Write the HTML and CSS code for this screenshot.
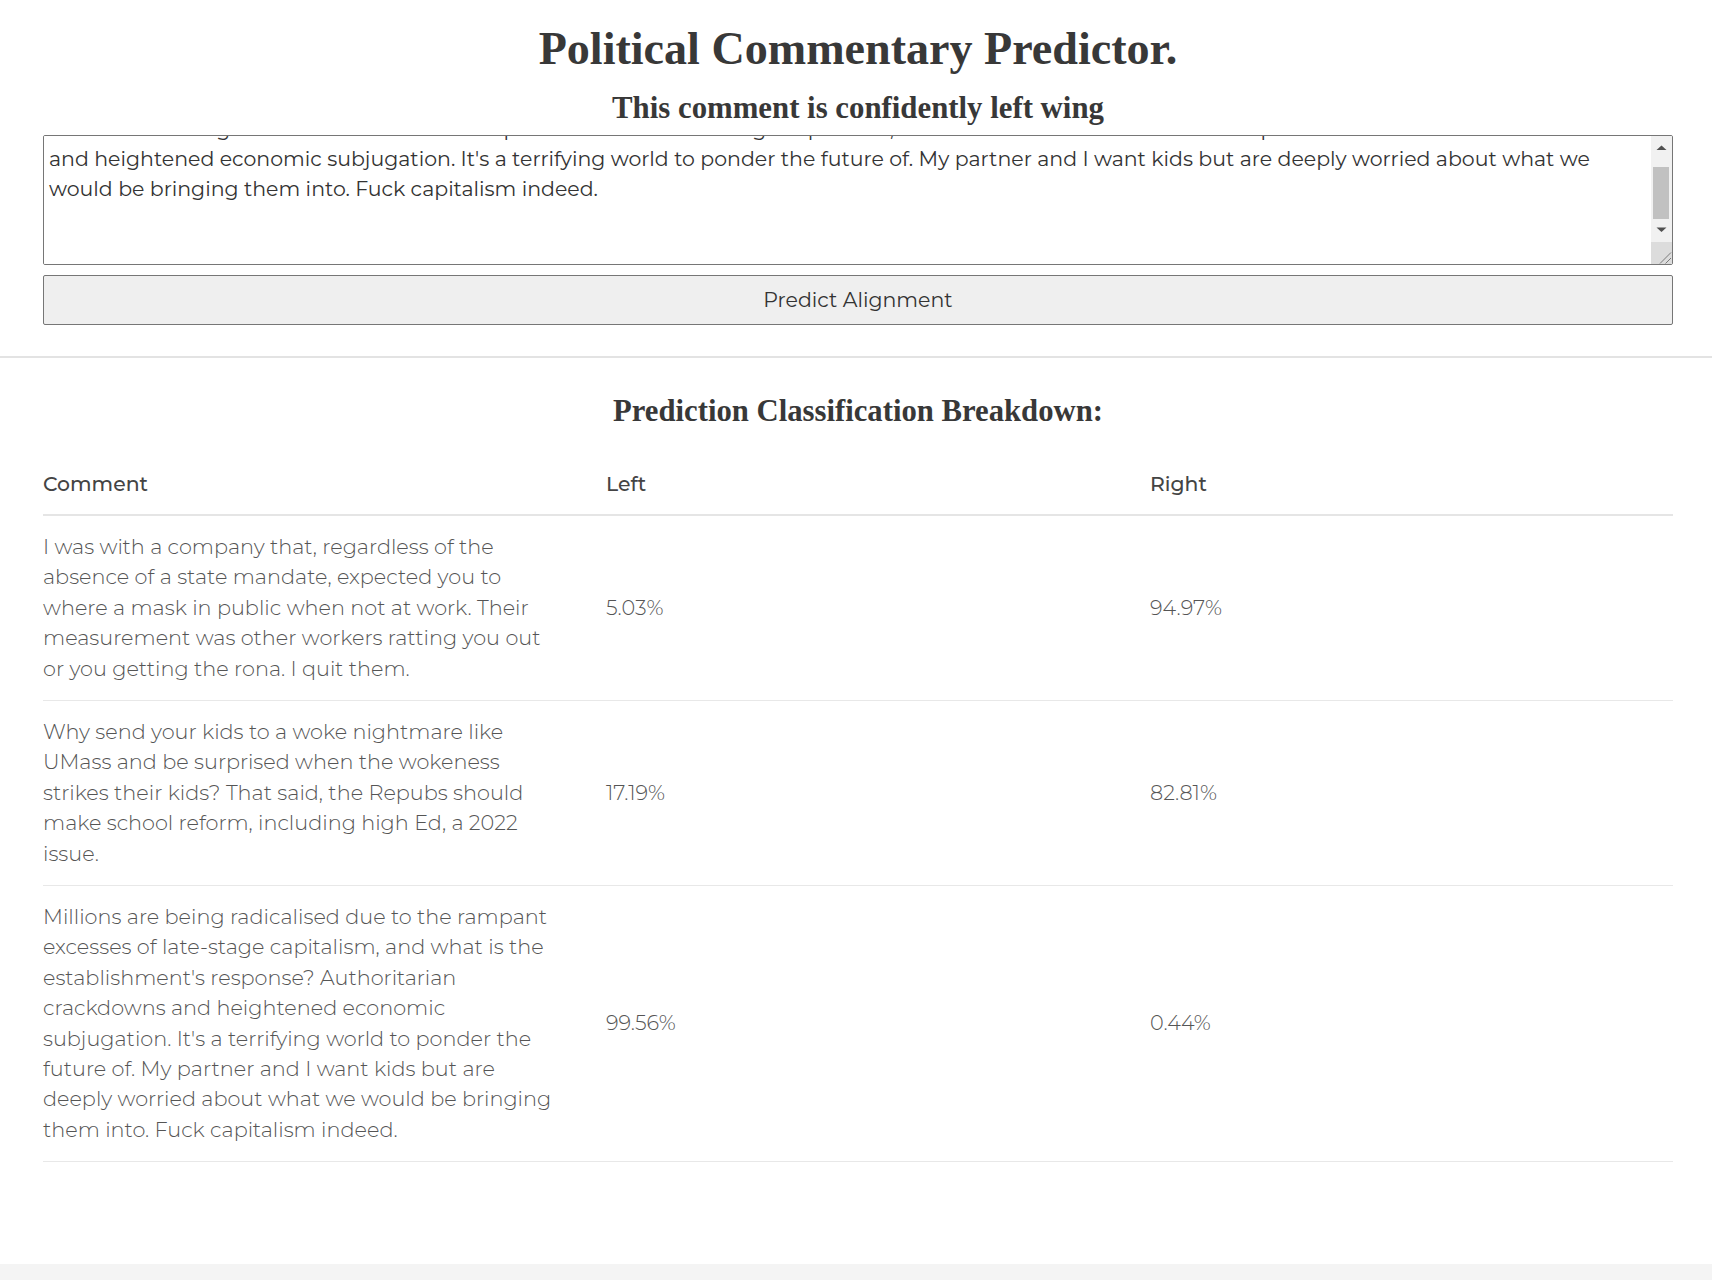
FILE: index.html
```html
<!DOCTYPE html>
<html lang="en">
<head>
<meta charset="utf-8">
<title>Political Commentary Predictor</title>
<link rel="stylesheet" href="styles.css">
</head>
<body>
<header class="predictor">
  <h1 class="page-title">Political Commentary Predictor.</h1>
  <h2 class="verdict">This comment is confidently left wing</h2>
  <form class="predict-form">
    <div class="input-frame">
      <textarea class="comment-input" id="comment">Millions are being radicalised due to the rampant excesses of late-stage capitalism, and what is the establishment's response? Authoritarian crackdowns and heightened economic subjugation. It's a terrifying world to ponder the future of. My partner and I want kids but are deeply worried about what we would be bringing them into. Fuck capitalism indeed.

</textarea>
      <div class="scrollbar" aria-hidden="true">
        <span class="sb-button"><svg width="21" height="21" viewBox="0 0 21 21"><polygon points="5.5,14 15.5,14 10.5,9.5"/></svg></span>
        <span class="sb-track"><span class="sb-thumb"></span></span>
        <span class="sb-button"><svg width="21" height="21" viewBox="0 0 21 21"><polygon points="5.5,8.5 15.5,8.5 10.5,13"/></svg></span>
        <span class="sb-corner"><svg width="21" height="22" viewBox="0 0 21 22"><line x1="9" y1="21.5" x2="20" y2="10.5"/><line x1="14.5" y1="21.5" x2="20" y2="16"/></svg></span>
      </div>
    </div>
    <button type="button" class="predict-btn">Predict Alignment</button>
  </form>
</header>
<main class="results">
  <h2 class="results-title">Prediction Classification Breakdown:</h2>
  <table class="breakdown">
    <colgroup>
      <col class="col-comment">
      <col class="col-left">
      <col class="col-right">
    </colgroup>
    <thead>
      <tr><th>Comment</th><th>Left</th><th>Right</th></tr>
    </thead>
    <tbody>
      <tr>
        <td class="cell-comment">I was with a company that, regardless of the absence of a state mandate, expected you to where a mask in public when not at work. Their measurement was other workers ratting you out or you getting the rona. I quit them.</td>
        <td>5.03%</td>
        <td>94.97%</td>
      </tr>
      <tr>
        <td class="cell-comment">Why send your kids to a woke nightmare like UMass and be surprised when the wokeness strikes their kids? That said, the Repubs should make school reform, including high Ed, a 2022 issue.</td>
        <td>17.19%</td>
        <td>82.81%</td>
      </tr>
      <tr>
        <td class="cell-comment">Millions are being radicalised due to the rampant excesses of late-stage capitalism, and what is the establishment's response? Authoritarian crackdowns and heightened economic subjugation. It's a terrifying world to ponder the future of. My partner and I want kids but are deeply worried about what we would be bringing them into. Fuck capitalism indeed.</td>
        <td>99.56%</td>
        <td>0.44%</td>
      </tr>
    </tbody>
  </table>
</main>
<script src="script.js"></script>
</body>
</html>
```

FILE: styles.css
```css
* { box-sizing: border-box; }

html, body { margin: 0; }

body {
  background: #f4f4f4;
  font-family: "Montserrat", "Open Sans", sans-serif;
  color: #333;
}

.predictor {
  background: #fff;
  padding: 22px 39px 31px 43px;
  border-bottom: 2px solid #e3e3e3;
}

.page-title {
  margin: 0;
  font-family: "Liberation Serif", "Times New Roman", serif;
  font-weight: 700;
  font-size: 46.1px;
  line-height: 54px;
  text-align: center;
  color: #383838;
}

.verdict {
  margin: 14px 0 0;
  font-family: "Liberation Serif", "Times New Roman", serif;
  font-weight: 700;
  font-size: 30.8px;
  line-height: 36px;
  text-align: center;
  color: #383838;
}

.predict-form {
  display: flex;
  flex-direction: column;
  gap: 10px;
  margin-top: 9px;
}

.input-frame {
  display: flex;
  height: 130px;
  border: 1px solid #767676;
  border-radius: 2px;
  background: #fff;
  overflow: hidden;
}

.comment-input {
  flex: 1;
  min-width: 0;
  display: block;
  margin: 0;
  padding: 2px 4px 0 5px;
  border: 0;
  outline: none;
  resize: none;
  overflow: hidden;
  font-family: "Montserrat", "Open Sans", sans-serif;
  font-size: 20.5px;
  line-height: 30px;
  color: #333;
  background: #fff;
}

.scrollbar {
  width: 21px;
  flex: none;
  display: flex;
  flex-direction: column;
  background: #f1f1f1;
}

.sb-button {
  display: block;
  height: 21px;
  flex: none;
}

.sb-button svg { display: block; fill: #505050; }

.sb-track {
  flex: 1;
  display: flex;
  flex-direction: column;
  justify-content: flex-end;
}

.sb-thumb {
  display: block;
  height: 52px;
  margin: 0 3px 0 2px;
  background: #c1c1c1;
}

.sb-corner {
  display: block;
  height: 24px;
  flex: none;
  border-top: 2px solid #f1f1f1;
  background: #dcdcdc;
}

.sb-corner svg { display: block; stroke: #7a7a7a; stroke-width: 1; }

.predict-btn {
  display: block;
  width: 100%;
  height: 50px;
  margin: 0;
  padding: 0 0 2px;
  background: #efefef;
  border: 1px solid #767676;
  border-radius: 2px;
  font-family: "Montserrat", "Open Sans", sans-serif;
  font-size: 20.5px;
  color: #333;
}

.results {
  background: #fff;
  padding: 35px 39px 102px 43px;
}

.results-title {
  margin: 0 0 22.5px;
  font-family: "Liberation Serif", "Times New Roman", serif;
  font-weight: 700;
  font-size: 30.7px;
  line-height: 36px;
  text-align: center;
  color: #383838;
}

.breakdown {
  width: 100%;
  border-collapse: collapse;
  table-layout: fixed;
}

.col-comment { width: 563px; }
.col-left { width: 544px; }

.breakdown th,
.breakdown td {
  text-align: left;
  padding: 16px 0;
  line-height: 30.4px;
}

.breakdown th {
  font-size: 20.4px;
  font-weight: 500;
  color: #444;
  border-bottom: 2px solid #e5e5e5;
  padding-top: 17px;
  padding-bottom: 15px;
}

.breakdown td {
  font-size: 20.8px;
  font-weight: 300;
  color: #555;
  border-bottom: 1px solid #e8e8e8;
  vertical-align: middle;
}

.breakdown .cell-comment { padding-right: 52px; }
```

FILE: script.js
```js
var ta = document.getElementById('comment');
ta.scrollTop = ta.scrollHeight;
```
